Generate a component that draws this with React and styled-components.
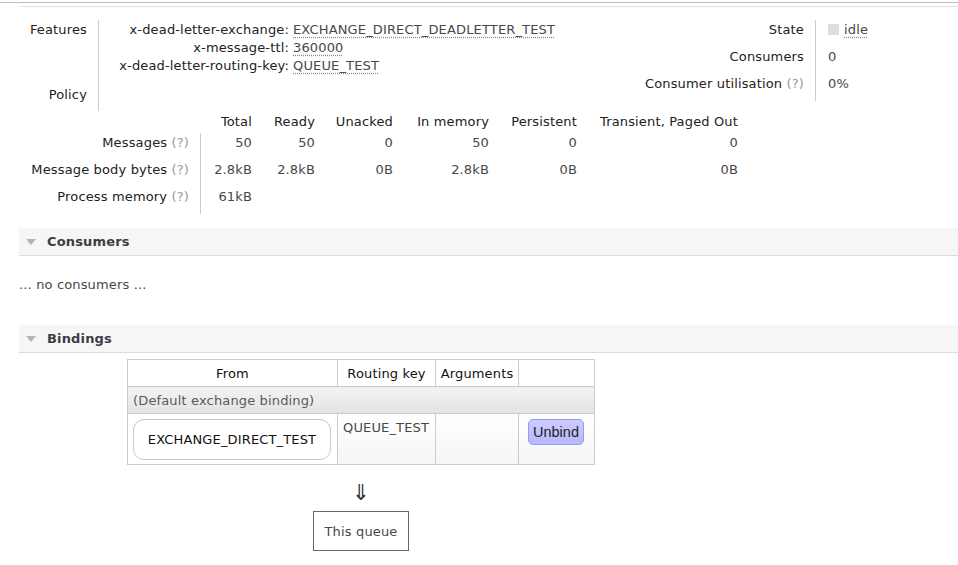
import React from "react";
import styled, { createGlobalStyle } from "styled-components";

const GlobalStyle = createGlobalStyle`
  html, body { margin: 0; padding: 0; background: #fff; }
  body {
    font-family: "DejaVu Sans", Verdana, sans-serif;
    font-size: 13px;
    line-height: 18px;
    letter-spacing: 0.15px;
    color: #484848;
  }
`;

const Page = styled.div`
  width: 958px;
  padding-top: 2px;
`;

const TopRule = styled.div`
  height: 1px;
  background: #bdbdbd;
`;

const Main = styled.div`
  margin-top: 3px;
  padding-left: 19px;
`;

const InfoPanel = styled.div`
  display: flex;
  justify-content: space-between;
  align-items: flex-start;
  border-top: 1px solid #e2e2e2;
  padding-top: 13px;
`;

const FactsGrid = styled.div`
  display: grid;
  grid-template-columns: 80px auto;
`;

const Th = styled.div`
  box-sizing: border-box;
  text-align: right;
  color: #222;
  padding-top: 1px;
  padding-right: 11px;
  padding-bottom: ${(p) => p.$pb || 0}px;
  border-right: 1px solid #ccc;
  white-space: nowrap;
`;

const Td = styled.div`
  padding-top: 1px;
  padding-left: ${(p) => p.$pl || 0}px;
  padding-bottom: ${(p) => p.$pb || 0}px;
  white-space: nowrap;
`;

const ArgGrid = styled.div`
  display: grid;
  grid-template-columns: 190px auto;
  column-gap: 4px;
`;

const ArgKey = styled.div`
  text-align: right;
  color: #222;
  white-space: nowrap;
`;

const Abbr = styled.span`
  color: #484848;
  text-decoration: underline dotted #8a8a8a;
  text-underline-offset: 3px;
`;

const StatusGrid = styled.div`
  display: grid;
  grid-template-columns: auto 142px;
`;

const StateBox = styled.span`
  display: inline-block;
  width: 11px;
  height: 11px;
  background: #dddddd;
  vertical-align: -1px;
  margin-right: 5px;
`;

const Help = styled.span`
  color: #999;
`;

const MsgGrid = styled.div`
  display: grid;
  grid-template-columns: 182px 51px 63px 78px 96px 88px 161px;
  margin-top: 1px;
`;

const MsgHead = styled.div`
  text-align: right;
  color: #222;
  padding: 1px 0 2px;
  white-space: nowrap;
`;

const MsgLabel = styled.div`
  box-sizing: border-box;
  text-align: right;
  color: #222;
  padding: 1px 11px 8px 0;
  border-right: 1px solid #ccc;
  white-space: nowrap;
`;

const MsgVal = styled.div`
  text-align: right;
  padding: 1px 0 8px;
  white-space: nowrap;
`;

const SectionHead = styled.div`
  display: flex;
  align-items: center;
  gap: 11px;
  margin-top: ${(p) => p.$mt}px;
  padding: 5px 0 4px 7px;
  background: #f6f6f6;
  border-bottom: 1px solid #dcdcdc;
  font-weight: bold;
  color: #3d3d45;
`;

const Triangle = styled.span`
  width: 0;
  height: 0;
  margin-top: -1px;
  border-left: 5px solid transparent;
  border-right: 5px solid transparent;
  border-top: 6px solid #b4b4b4;
`;

const Empty = styled.p`
  margin: 20px 0 0;
`;

const BindingsWrap = styled.div`
  display: inline-flex;
  flex-direction: column;
  align-items: center;
  margin: 6px 0 0 108px;
`;

const BindTable = styled.table`
  border-collapse: collapse;
  table-layout: fixed;
  width: 468px;
`;

const HeadCell = styled.th`
  width: ${(p) => p.$w}px;
  box-sizing: border-box;
  font-weight: normal;
  color: #111;
  text-align: center;
  padding: 5px 4px 3px;
  border: 1px solid #ccc;
  background: #fff;
  white-space: nowrap;
`;

const GroupCell = styled.th`
  font-weight: normal;
  text-align: left;
  color: #5a5a5a;
  padding: 5px 5px 3px;
  border: 1px solid #ccc;
  background: linear-gradient(#f3f3f3, #e3e3e3);
`;

const BodyCell = styled.td`
  vertical-align: top;
  padding: ${(p) => p.$pad || "5px 5px 3px"};
  border: 1px solid #ccc;
  background: ${(p) => (p.$plain ? "#fff" : "linear-gradient(#ffffff, #f5f5f5)")};
  white-space: nowrap;
`;

const ExchangeBox = styled.div`
  border: 1px solid #c8c8c8;
  border-radius: 11px;
  background: #fff;
  color: #111;
  text-align: center;
  padding: 11px 0 10px;
`;

const UnbindButton = styled.button`
  font-family: "Liberation Sans", Arial, sans-serif;
  font-size: 14.5px;
  line-height: 18px;
  letter-spacing: 0;
  color: #222;
  padding: 3px 4px;
  border: 1px solid #9a9af0;
  border-radius: 5px;
  background: linear-gradient(#ccccff, #b8b8fb);
  cursor: pointer;
`;

const FlowArrow = styled.div`
  margin-top: 17px;
  font-size: 22px;
  line-height: 22px;
  color: #333;
`;

const QueueBox = styled.div`
  margin-top: 7px;
  border: 1px solid #666;
  padding: 11px 11px 9px;
  color: #484848;
`;

const args = [
  ["x-dead-letter-exchange:", "EXCHANGE_DIRECT_DEADLETTER_TEST"],
  ["x-message-ttl:", "360000"],
  ["x-dead-letter-routing-key:", "QUEUE_TEST"],
];

const msgCols = ["Total", "Ready", "Unacked", "In memory", "Persistent", "Transient, Paged Out"];
const msgRows = [
  ["Messages", ["50", "50", "0", "50", "0", "0"]],
  ["Message body bytes", ["2.8kB", "2.8kB", "0B", "2.8kB", "0B", "0B"]],
  ["Process memory", ["61kB"]],
];

export default function App() {
  return (
    <>
      <GlobalStyle />
      <Page>
        <TopRule />
        <Main>
          <InfoPanel>
            <FactsGrid>
              <Th $pb={10}>Features</Th>
              <Td $pb={10}>
                <ArgGrid>
                  {args.map(([k, v]) => (
                    <React.Fragment key={k}>
                      <ArgKey>{k}</ArgKey>
                      <div>
                        <Abbr>{v}</Abbr>
                      </div>
                    </React.Fragment>
                  ))}
                </ArgGrid>
              </Td>
              <Th $pb={7}>Policy</Th>
              <Td $pb={7} />
            </FactsGrid>
            <StatusGrid>
              <Th $pb={8}>State</Th>
              <Td $pl={12} $pb={8}>
                <StateBox />
                <Abbr>idle</Abbr>
              </Td>
              <Th $pb={8}>Consumers</Th>
              <Td $pl={12} $pb={8}>0</Td>
              <Th $pb={8}>
                Consumer utilisation <Help>(?)</Help>
              </Th>
              <Td $pl={12} $pb={8}>0%</Td>
            </StatusGrid>
          </InfoPanel>

          <MsgGrid>
            <div />
            {msgCols.map((c) => (
              <MsgHead key={c}>{c}</MsgHead>
            ))}
            {msgRows.map(([label, vals]) => (
              <React.Fragment key={label}>
                <MsgLabel>
                  {label} <Help>(?)</Help>
                </MsgLabel>
                {msgCols.map((c, i) => (
                  <MsgVal key={c}>{vals[i] ?? ""}</MsgVal>
                ))}
              </React.Fragment>
            ))}
          </MsgGrid>

          <SectionHead $mt={14}>
            <Triangle />
            Consumers
          </SectionHead>
          <Empty>... no consumers ...</Empty>

          <SectionHead $mt={31}>
            <Triangle />
            Bindings
          </SectionHead>
          <BindingsWrap>
            <BindTable>
              <thead>
                <tr>
                  <HeadCell $w={210}>From</HeadCell>
                  <HeadCell $w={98}>Routing key</HeadCell>
                  <HeadCell $w={83}>Arguments</HeadCell>
                  <HeadCell $w={76}></HeadCell>
                </tr>
              </thead>
              <tbody>
                <tr>
                  <GroupCell colSpan={4}>(Default exchange binding)</GroupCell>
                </tr>
                <tr>
                  <BodyCell $plain $pad="5px 6px 4px 5px">
                    <ExchangeBox>EXCHANGE_DIRECT_TEST</ExchangeBox>
                  </BodyCell>
                  <BodyCell>QUEUE_TEST</BodyCell>
                  <BodyCell />
                  <BodyCell $pad="5px 9px 4px 9px">
                    <UnbindButton>Unbind</UnbindButton>
                  </BodyCell>
                </tr>
              </tbody>
            </BindTable>
            <FlowArrow>⇓</FlowArrow>
            <QueueBox>This queue</QueueBox>
          </BindingsWrap>
        </Main>
      </Page>
    </>
  );
}
